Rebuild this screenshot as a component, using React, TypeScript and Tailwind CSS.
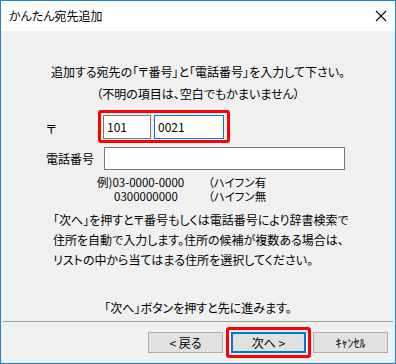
import React from 'react';

const jp = "font-['Noto_Sans_CJK_JP',sans-serif] [font-feature-settings:'palt']";

function CloseIcon() {
  return (
    <svg width="12" height="12" viewBox="0 0 12 12" className="block">
      <path d="M1 1 L11 11 M11 1 L1 11" stroke="#000" strokeWidth="1.1" fill="none" />
    </svg>
  );
}

export default function App() {
  return (
    <div className={`w-[396px] h-[364px] border border-[#1883d7] bg-[#f0f0f0] flex flex-col text-black ${jp}`}>
      {/* title bar */}
      <div className="h-[30px] bg-white flex items-center justify-between pl-[8px] pr-[8px] shrink-0">
        <span className="text-[12px] leading-none">かんたん宛先追加</span>
        <CloseIcon />
      </div>

      <div className="flex-1 flex flex-col text-[12px]">
        <p className="mt-[33px] h-[16px] leading-[16px] text-center">
          追加する宛先の「〒番号」と「電話番号」を入力して下さい。
        </p>
        <p className="mt-[6px] h-[16px] leading-[16px] text-center">
          （不明の項目は、空白でもかまいません）
        </p>

        {/* postal code */}
        <div className="mt-[8px] flex items-center">
          <span className="ml-[45px] w-[52px] pt-[4px]">〒</span>
          <div className="w-[132px] h-[33px] border-[3px] border-[#ff0000] rounded-[3px] flex items-center gap-[3px] px-[2px] pt-[1px]">
            <div className="w-[48px] h-[24px] bg-white border border-[#7a7a7a] flex items-center pl-[3px]">101</div>
            <div className="w-[70px] h-[24px] bg-white border border-[#0078d7] flex items-center pl-[3px]">0021</div>
          </div>
        </div>

        {/* phone */}
        <div className="mt-[4px] flex items-center">
          <span className="ml-[45px] w-[58px]">電話番号</span>
          <div className="w-[241px] h-[23px] bg-white border border-[#7a7a7a]" />
        </div>

        {/* example */}
        <div className="mt-[5px] text-[11.5px] leading-[14px]">
          <div className="flex h-[14px]">
            <span className="ml-[96px] w-[111px]">例)03-0000-0000</span>
            <span>（ハイフン有</span>
          </div>
          <div className="flex h-[14px]">
            <span className="ml-[113px] w-[94px]">0300000000</span>
            <span>（ハイフン無</span>
          </div>
        </div>

        {/* help */}
        <div className="mt-[7px] ml-[52px] leading-[20px]">
          <p>「次へ」を押すと〒番号もしくは電話番号により辞書検索で</p>
          <p>住所を自動で入力します。住所の候補が複数ある場合は、</p>
          <p>リストの中から当てはまる住所を選択してください。</p>
        </div>

        <p className="mt-[30px] h-[16px] leading-[16px] text-center">
          「次へ」ボタンを押すと先に進みます。
        </p>

        <div className="mt-[5px] mx-[2px] h-px bg-[#a0a0a0]" />

        {/* buttons */}
        <div className="mt-[5px] flex items-center justify-end pr-[7px]">
          <button className="w-[75px] h-[21px] bg-[#e1e1e1] border border-[#adadad] leading-none">
            &lt; 戻る
          </button>
          <div className="ml-[3px] border-[3px] border-[#ff0000] rounded-[3px] p-[2px]">
            <button className="block w-[75px] h-[21px] bg-[#e1e1e1] border-2 border-[#0078d7] leading-none">
              次へ &gt;
            </button>
          </div>
          <button className="ml-[2px] w-[75px] h-[21px] bg-[#e1e1e1] border border-[#adadad] leading-none">
            ｷｬﾝｾﾙ
          </button>
        </div>
      </div>
    </div>
  );
}
